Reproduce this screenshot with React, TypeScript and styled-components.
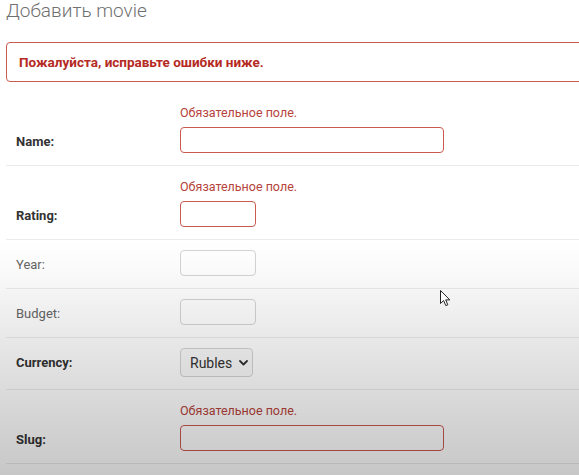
import React from "react";
import styled, { createGlobalStyle } from "styled-components";

const Global = createGlobalStyle`
  html, body { margin: 0; padding: 0; background: #fff; overflow: hidden; }
  body { font-family: Roboto, "Liberation Sans", sans-serif; color: #333; }
`;

const Page = styled.div`
  position: relative;
  width: 579px;
  height: 475px;
  overflow: hidden;
  background: #fff;
`;

const Content = styled.div`
  width: 720px;
  padding-left: 6px;
`;

const Title = styled.h1`
  margin: 0 0 20px;
  font-size: 19px;
  font-weight: 300;
  line-height: 22px;
  color: #707070;
`;

const ErrorNote = styled.p`
  margin: 0 0 10px;
  padding: 10px 12px;
  border: 1px solid #c85a52;
  border-radius: 4px;
  color: #b52a24;
  font-weight: 700;
  font-size: 13.5px;
  line-height: 18px;
`;

const Row = styled.div`
  padding: 10px;
  border-bottom: 1px solid #ebebeb;
`;

const ErrorList = styled.ul`
  margin: 0 0 4px;
  padding: 0 0 0 164px;
  list-style: none;
  font-size: 12.5px;
  line-height: 21px;
  color: #b6433b;
`;

const FieldLine = styled.div<{ $min?: number }>`
  display: flex;
  align-items: flex-start;
  min-height: ${(p) => p.$min ?? 28}px;
`;

const Label = styled.label<{ $required?: boolean }>`
  width: 164px;
  flex-shrink: 0;
  padding-top: 7px;
  font-size: 13px;
  line-height: 16px;
  font-weight: ${(p) => (p.$required ? 700 : 400)};
  color: ${(p) => (p.$required ? "#333" : "#666")};
`;

const TextInput = styled.input<{ $width: number; $error?: boolean }>`
  box-sizing: border-box;
  width: ${(p) => p.$width}px;
  height: 26px;
  margin: 0;
  padding: 5px 6px;
  border: 1px solid ${(p) => (p.$error ? "#c85a52" : "#d4d4d4")};
  border-radius: 4px;
  background: #fff;
  font: inherit;
  font-size: 13px;
  outline: none;
`;

const SelectWrap = styled.div`
  position: relative;
  width: 73px;
  height: 29px;
`;

const Select = styled.select`
  appearance: none;
  -webkit-appearance: none;
  box-sizing: border-box;
  width: 73px;
  height: 29px;
  margin: 0;
  padding: 0 0 0 9px;
  border: 1px solid #d4d4d4;
  border-radius: 4px;
  background: #fafafa;
  color: #333;
  font-family: Roboto, "Liberation Sans", sans-serif;
  font-size: 14px;
  outline: none;
`;

const Chevron = styled.svg`
  position: absolute;
  left: 59px;
  top: 12px;
  pointer-events: none;
`;

const Shade = styled.div`
  position: absolute;
  inset: 0;
  pointer-events: none;
  background: linear-gradient(
    to bottom,
    rgba(0, 0, 0, 0) 0px,
    rgba(0, 0, 0, 0) 240px,
    rgba(0, 0, 0, 0.02) 270px,
    rgba(0, 0, 0, 0.05) 300px,
    rgba(0, 0, 0, 0.1) 350px,
    rgba(0, 0, 0, 0.16) 410px,
    rgba(0, 0, 0, 0.22) 475px
  );
`;

const Cursor = styled.svg`
  position: absolute;
  left: 440px;
  top: 290px;
  pointer-events: none;
`;

const REQUIRED = "Обязательное поле.";

export default function App() {
  return (
    <Page>
      <Global />
      <Content>
        <Title>Добавить movie</Title>
        <ErrorNote>Пожалуйста, исправьте ошибки ниже.</ErrorNote>

        <Row>
          <ErrorList>
            <li>{REQUIRED}</li>
          </ErrorList>
          <FieldLine>
            <Label $required>Name:</Label>
            <TextInput $width={264} $error />
          </FieldLine>
        </Row>

        <Row>
          <ErrorList>
            <li>{REQUIRED}</li>
          </ErrorList>
          <FieldLine>
            <Label $required>Rating:</Label>
            <TextInput $width={76} $error />
          </FieldLine>
        </Row>

        <Row>
          <FieldLine>
            <Label>Year:</Label>
            <TextInput $width={76} />
          </FieldLine>
        </Row>

        <Row>
          <FieldLine>
            <Label>Budget:</Label>
            <TextInput $width={76} />
          </FieldLine>
        </Row>

        <Row>
          <FieldLine $min={31}>
            <Label $required>Currency:</Label>
            <SelectWrap>
              <Select defaultValue="rub">
                <option value="rub">Rubles</option>
              </Select>
              <Chevron width="9" height="6" viewBox="0 0 9 6">
                <path d="M1 1 L4.5 4.5 L8 1" fill="none" stroke="#333" strokeWidth="1.8" strokeLinecap="round" strokeLinejoin="round" />
              </Chevron>
            </SelectWrap>
          </FieldLine>
        </Row>

        <Row>
          <ErrorList>
            <li>{REQUIRED}</li>
          </ErrorList>
          <FieldLine>
            <Label $required>Slug:</Label>
            <TextInput $width={264} $error />
          </FieldLine>
        </Row>
      </Content>
      <Shade />
      <Cursor width="11" height="17" viewBox="0 0 11 17">
        <path d="M0.5 0.5 L0.5 13.5 L3.6 10.6 L5.8 15.6 L7.8 14.8 L5.7 9.9 L9.8 9.9 Z" fill="#fff" stroke="#222" strokeWidth="1" strokeLinejoin="round" />
      </Cursor>
    </Page>
  );
}
